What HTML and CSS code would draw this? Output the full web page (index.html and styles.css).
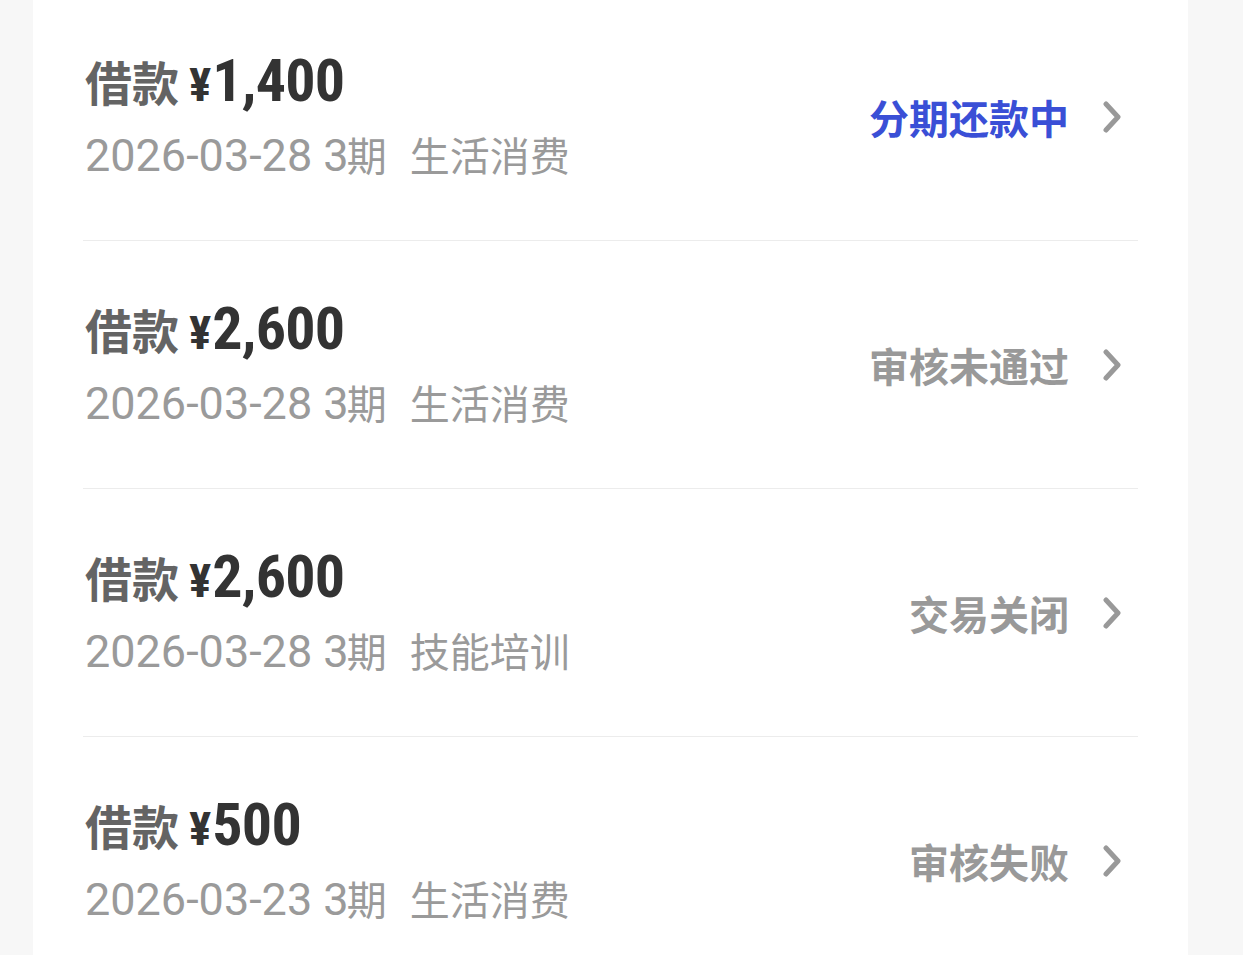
FILE: index.html
```html
<!DOCTYPE html>
<html lang="zh-CN">
<head>
<meta charset="utf-8">
<link rel="stylesheet" href="styles.css">
</head>
<body>
<div class="card">
  <div class="row">
    <div class="info">
      <div class="title"><span class="label">借款</span> <span class="yen">¥</span><span class="amt">1,400</span></div>
      <div class="sub"><span class="num">2026-03-28 3</span><span class="cjk">期</span><span class="cat">生活消费</span></div>
    </div>
    <div class="status blue">分期还款中<svg class="chev" viewBox="0 0 18 32" width="18" height="32"><path d="M3 3 L15 16 L3 29" fill="none" stroke="#999" stroke-width="5" stroke-linecap="round" stroke-linejoin="round"/></svg></div>
  </div>
  <div class="row">
    <div class="info">
      <div class="title"><span class="label">借款</span> <span class="yen">¥</span><span class="amt">2,600</span></div>
      <div class="sub"><span class="num">2026-03-28 3</span><span class="cjk">期</span><span class="cat">生活消费</span></div>
    </div>
    <div class="status">审核未通过<svg class="chev" viewBox="0 0 18 32" width="18" height="32"><path d="M3 3 L15 16 L3 29" fill="none" stroke="#999" stroke-width="5" stroke-linecap="round" stroke-linejoin="round"/></svg></div>
  </div>
  <div class="row">
    <div class="info">
      <div class="title"><span class="label">借款</span> <span class="yen">¥</span><span class="amt">2,600</span></div>
      <div class="sub"><span class="num">2026-03-28 3</span><span class="cjk">期</span><span class="cat">技能培训</span></div>
    </div>
    <div class="status">交易关闭<svg class="chev" viewBox="0 0 18 32" width="18" height="32"><path d="M3 3 L15 16 L3 29" fill="none" stroke="#999" stroke-width="5" stroke-linecap="round" stroke-linejoin="round"/></svg></div>
  </div>
  <div class="row">
    <div class="info">
      <div class="title"><span class="label">借款</span> <span class="yen">¥</span><span class="amt">500</span></div>
      <div class="sub"><span class="num">2026-03-23 3</span><span class="cjk">期</span><span class="cat">生活消费</span></div>
    </div>
    <div class="status">审核失败<svg class="chev" viewBox="0 0 18 32" width="18" height="32"><path d="M3 3 L15 16 L3 29" fill="none" stroke="#999" stroke-width="5" stroke-linecap="round" stroke-linejoin="round"/></svg></div>
  </div>
</div>
</body>
</html>
```
FILE: styles.css
```css
html, body {
  margin: 0;
  padding: 0;
  background: #f7f7f7;
  font-family: Roboto, "Noto Sans CJK SC", sans-serif;
}
body {
  height: 955px;
  overflow: hidden;
}
.card {
  margin: -7px 55px 0 33px;
  background: #fff;
  padding: 0 50px;
}
.row {
  display: flex;
  align-items: center;
  justify-content: space-between;
  height: 247px;
  border-bottom: 1px solid #ececec;
  box-sizing: content-box;
}
.info {
  display: flex;
  flex-direction: column;
  gap: 15px;
  padding-left: 2px;
}
.title {
  height: 60px;
  line-height: 60px;
  white-space: nowrap;
  display: flex;
  align-items: baseline;
}
.label {
  font-family: "Noto Sans CJK SC", sans-serif;
  font-weight: 700;
  font-size: 47px;
  color: #646464;
  margin-right: 10px;
}
.yen {
  font-family: Roboto, sans-serif;
  font-weight: 700;
  font-size: 47px;
  color: #333;
  margin-right: 1px;
  font-stretch: condensed;
}
.amt {
  font-family: Roboto, sans-serif;
  font-weight: 700;
  font-size: 60px;
  color: #333;
  letter-spacing: -0.8px;
  font-stretch: condensed;
}
.sub {
  height: 56px;
  line-height: 56px;
  color: #9a9a9a;
  white-space: nowrap;
  display: flex;
  align-items: baseline;
}
.num {
  font-family: Roboto, sans-serif;
  font-size: 45px;
  white-space: pre;
}
.cjk, .cat {
  font-family: "Noto Sans CJK SC", sans-serif;
  font-size: 40px;
}
.cjk {
  margin-left: -2px;
}
.cat {
  margin-left: 23px;
}
.status {
  display: flex;
  align-items: center;
  font-family: "Noto Sans CJK SC", sans-serif;
  font-weight: 700;
  font-size: 40px;
  color: #999;
  padding-right: 17px;
}
.status.blue {
  color: #3a4fd6;
}
.chev {
  margin-left: 34px;
  display: block;
}
```
